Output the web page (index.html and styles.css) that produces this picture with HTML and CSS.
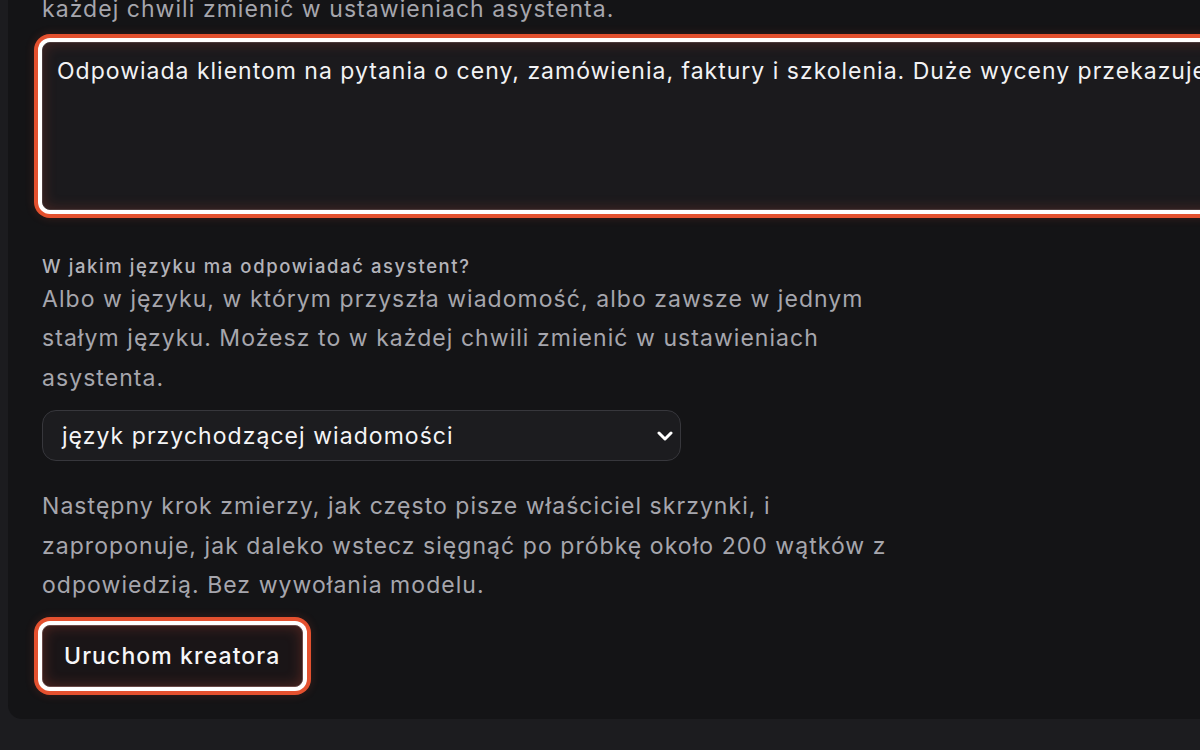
FILE: index.html
```html
<!DOCTYPE html>
<html lang="pl">
<head>
<meta charset="utf-8">
<link rel="stylesheet" href="styles.css">
</head>
<body>
<div class="page">
  <section class="card">
    <p class="hint top-hint">każdej chwili zmienić w ustawieniach asystenta.</p>
    <textarea class="field textarea" rows="4">Odpowiada klientom na pytania o ceny, zamówienia, faktury i szkolenia. Duże wyceny przekazuje do działu sprzedaży.</textarea>

    <div class="group">
      <label class="label">W jakim języku ma odpowiadać asystent?</label>
      <p class="hint">Albo w języku, w którym przyszła wiadomość, albo zawsze w jednym stałym języku. Możesz to w każdej chwili zmienić w ustawieniach asystenta.</p>
      <div class="select-wrap">
        <span class="select-value">język przychodzącej wiadomości</span>
        <svg class="chevron" viewBox="0 0 16 10" width="16" height="10"><path d="M2 2 L8 8 L14 2" fill="none" stroke="#ffffff" stroke-width="3" stroke-linecap="round" stroke-linejoin="round"/></svg>
      </div>
    </div>

    <p class="hint note">Następny krok zmierzy, jak często pisze właściciel skrzynki, i zaproponuje, jak daleko wstecz sięgnąć po próbkę około 200 wątków z odpowiedzią. Bez wywołania modelu.</p>

    <div class="actions">
      <button class="btn">Uruchom kreatora</button>
    </div>
  </section>
</div>
</body>
</html>
```

FILE: styles.css
```css
html, body {
  margin: 0;
  padding: 0;
  background: #1c1c1f;
  overflow: hidden;
  height: 750px;
}

body {
  font-family: Inter, "Noto Sans", "Liberation Sans", sans-serif;
  color: #e8e8ea;
}

.page {
  padding: 0 0 0 8px;
  width: 1500px;
}

.card {
  background: #141416;
  border-radius: 0 0 14px 14px;
  padding: 0 34px 32px 34px;
  margin-top: -10px;
}

.hint {
  margin: 0;
  font-size: 23px;
  line-height: 39.5px;
  letter-spacing: 1.05px;
  color: #a6a6ad;
  max-width: 880px;
}

.top-hint {
  max-width: none;
}

.field {
  display: block;
  box-sizing: border-box;
  width: 1300px;
  margin-top: 12px;
  height: 168px;
  padding: 12px 14px;
  font-family: inherit;
  font-size: 23px;
  line-height: 32px;
  letter-spacing: 1px;
  color: #f2f2f4;
  background: #1b1a1d;
  border: 1px solid #4a3a3a;
  border-radius: 8px;
  resize: none;
  outline: none;
  white-space: nowrap;
  overflow: hidden;
  box-shadow:
    inset 0 0 14px rgba(229, 83, 58, 0.22),
    0 0 0 4px #ffffff,
    0 0 0 8px #e4512f,
    0 0 10px 8px rgba(229, 83, 58, 0.18);
}

.group {
  margin-top: 43px;
}

.label {
  display: block;
  font-size: 18.5px;
  line-height: 27px;
  letter-spacing: 1.6px;
  font-weight: 500;
  color: #b3b3ba;
}

.select-wrap {
  margin-top: 12px;
  box-sizing: border-box;
  width: 639px;
  height: 51px;
  border: 1px solid #37373c;
  border-radius: 14px;
  background: #1c1c1f;
  display: flex;
  align-items: center;
  justify-content: space-between;
  padding: 0 7px 0 19px;
}

.select-value {
  font-size: 23px;
  letter-spacing: 1.05px;
  color: #f4f4f6;
}

.chevron {
  display: block;
}

.note {
  margin-top: 26px;
}

.actions {
  margin-top: 19px;
}

.btn {
  box-sizing: border-box;
  height: 62px;
  margin-left: 0;
  padding: 0 22px 0 21px;
  font-family: inherit;
  font-size: 23px;
  font-weight: 500;
  letter-spacing: 1.1px;
  color: #f6f6f8;
  background: #1a1517;
  border: 1px solid #6a4a48;
  border-radius: 8px;
  box-shadow:
    inset 0 0 14px rgba(229, 83, 58, 0.28),
    0 0 0 4px #ffffff,
    0 0 0 8px #e4512f,
    0 0 10px 8px rgba(229, 83, 58, 0.18);
}
```
